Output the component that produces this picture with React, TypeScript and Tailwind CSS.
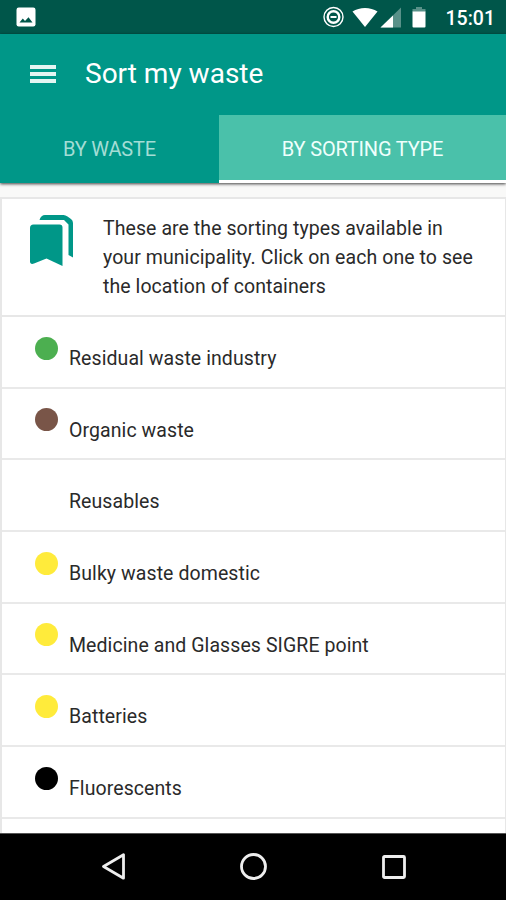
import clsx from "clsx";

const sortingTypes = [
  { name: "Residual waste industry", color: "bg-[#4caf50]" },
  { name: "Organic waste", color: "bg-[#795548]" },
  { name: "Reusables", color: "bg-transparent" },
  { name: "Bulky waste domestic", color: "bg-[#ffeb3b]" },
  { name: "Medicine and Glasses SIGRE point", color: "bg-[#ffeb3b]" },
  { name: "Batteries", color: "bg-[#ffeb3b]" },
  { name: "Fluorescents", color: "bg-black" },
];

const StatusBar = () => (
  <div className="flex h-[34px] shrink-0 items-center bg-[#00564a] pr-[11px] pl-4 text-white">
    <svg className="h-5 w-5" viewBox="0 0 20 20">
      <rect x="0.5" y="0.5" width="19" height="19" rx="2.2" fill="#fff" />
      <path d="M3.5 15.5 L6.8 11.5 L9 14 L12.5 10.2 L16.5 15.5 Z" fill="#00564a" />
    </svg>
    <div className="ml-auto flex items-center">
      {/* do not disturb */}
      <svg className="h-[22px] w-[22px]" viewBox="0 0 22 22" fill="none" stroke="#fff">
        <circle cx="11.5" cy="11" r="9.5" strokeWidth="1.4" />
        <circle cx="11.5" cy="11" r="5.8" strokeWidth="2.4" />
        <path d="M8.5 11h6" strokeWidth="2" />
      </svg>
      {/* wifi */}
      <svg className="ml-[8px] h-[22px] w-[26px]" viewBox="0 0 26 22">
        <path d="M13 21 L0.5 5.5 C7.5 0.7 18.5 0.7 25.5 5.5 Z" fill="#fff" />
      </svg>
      {/* mobile signal */}
      <svg className="ml-[2px] h-[22px] w-[22px]" viewBox="0 0 22 22">
        <path d="M0.5 21.5 L21 1.5 V21.5 Z" fill="#fff" opacity="0.35" />
        <path d="M0.5 21.5 L13 9.5 V21.5 Z" fill="#fff" />
      </svg>
      {/* battery */}
      <svg className="ml-[9px] h-[22px] w-[16px]" viewBox="0 0 16 22">
        <path d="M5 1h6v2h3.5v3h-13v-3h3.5z" fill="#fff" opacity="0.35" />
        <path d="M1.5 5.5h13v15a1 1 0 0 1-1 1h-11a1 1 0 0 1-1-1z" fill="#fff" />
      </svg>
      <span className="mt-[3px] ml-[19px] text-[19.5px] leading-none font-medium">15:01</span>
    </div>
  </div>
);

const AppBar = () => (
  <div className="flex h-[81px] shrink-0 items-center pb-[2px]">
    <div className="ml-[30px] flex w-[26px] flex-col gap-[3px]">
      <div className="h-1 bg-[#e4f5f2]" />
      <div className="h-1 bg-[#e4f5f2]" />
      <div className="h-1 bg-[#e4f5f2]" />
    </div>
    <h1 className="ml-[29px] text-[28px] leading-none text-white">Sort my waste</h1>
  </div>
);

const Tabs = () => (
  <div className="flex h-[68px] shrink-0 text-[20px] tracking-[-0.18px]">
    <div className="flex w-[219px] items-center justify-center text-[#a3ddd5]">BY WASTE</div>
    <div className="flex flex-1 items-center justify-center border-b-[3px] border-white bg-[#4ac1aa] pt-[3px] text-[#effffc]">
      BY SORTING TYPE
    </div>
  </div>
);

const NavigationBar = () => (
  <div className="flex h-[67px] shrink-0 items-center border-t border-[#555] bg-black">
    <svg className="ml-[101px] h-[28px] w-[25px]" viewBox="0 0 25 28" fill="none" stroke="#eee" strokeWidth="2.8" strokeLinejoin="round">
      <path d="M2.5 13.5 L22.5 1.8 V25.2 Z" />
    </svg>
    <svg className="ml-[113px] h-[28px] w-[28px]" viewBox="0 0 28 28" fill="none" stroke="#eee" strokeWidth="2.8">
      <circle cx="14.5" cy="13.5" r="12" />
    </svg>
    <svg className="ml-[114px] h-[26px] w-[26px]" viewBox="0 0 26 26" fill="none" stroke="#eee" strokeWidth="2.8">
      <rect x="2.5" y="2.5" width="21" height="21" rx="1" />
    </svg>
  </div>
);

const App = () => {
  return (
    <div className="flex h-[900px] w-[506px] flex-col overflow-hidden bg-[#f9f9f8] font-['Roboto',sans-serif]">
      <StatusBar />
      <div className="z-10 shrink-0 bg-[#009788] shadow-[0_1px_3px_rgba(0,0,0,0.75)]">
        <AppBar />
        <Tabs />
      </div>

      <main className="mt-[14px] min-h-0 flex-1 overflow-hidden border-x-2 border-t-2 border-r-1 border-[#e7e7e7] bg-white text-[19.5px] tracking-[0.08px] text-[#2a2a2a]">
        <div className="flex h-[118px] border-b-2 border-[#e7e7e7]">
          <svg className="mt-[15px] ml-[28px] h-[52px] w-[43px] shrink-0" viewBox="0 0 43 52" fill="#009788">
            <path d="M3.5 10.5h26a3 3 0 0 1 3 3V52l-16-7.5L4 49.5c-2.5 1-4 0-4-2V14a3.5 3.5 0 0 1 3.5-3.5z" />
            <path d="M9.5 6C10.5 2.5 12.5 1 15 1h18.5q2 0 4 1.5l3.5 2.5q2 1.5 2 4V43.5l-4.5-2.5V10.5L34 6z" />
          </svg>
          <p className="mt-[14.5px] ml-[30px] w-[385px] leading-[29.3px] tracking-[0.07px]">
            These are the sorting types available in
            <br />
            your municipality. Click on each one to see
            <br />
            the location of containers
          </p>
        </div>

        {sortingTypes.map((type) => (
          <div key={type.name} className="flex h-[71.7px] border-b-2 border-[#e9e9e9]">
            <span className={clsx("mt-[19.5px] ml-[33px] h-[23px] w-[23px] shrink-0 rounded-full", type.color)} />
            <span className="mt-[30px] ml-[11px] leading-6">{type.name}</span>
          </div>
        ))}
      </main>

      <NavigationBar />
    </div>
  );
};

export default App;
